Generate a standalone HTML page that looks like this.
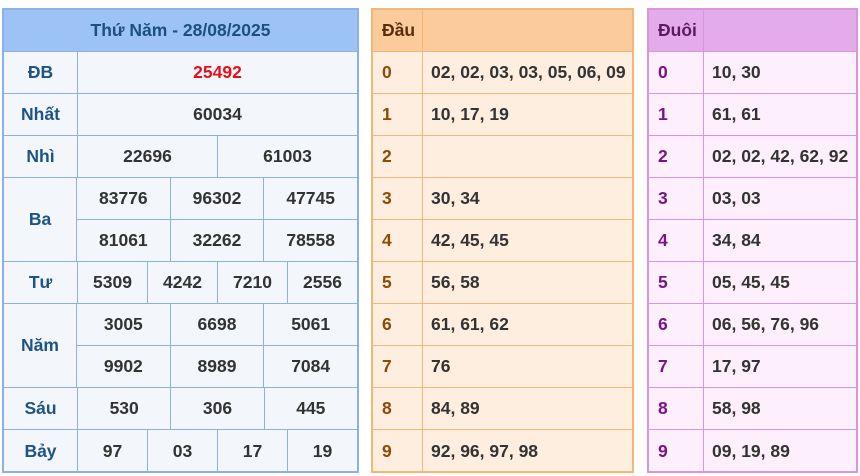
<!DOCTYPE html>
<html><head><meta charset="utf-8"><style>
*{box-sizing:border-box;margin:0;padding:0}
body{width:860px;height:476px;background:#fff;font-family:"Liberation Sans",Arial,sans-serif;font-weight:bold;font-size:17.5px;color:#333;position:relative;overflow:hidden}
.t{position:absolute;top:8px;height:465px}
.row{display:flex;height:42px;border-bottom:1px solid}
.row:last-child{border-bottom:none}
.c{display:flex;align-items:center;justify-content:center;flex:1;border-left:1px solid;height:100%}
.c:first-child{border-left:none}
#L{left:2px;width:357px;border:2px solid #8cb1e6;background:#f3f6fb}
#L .row,#L .c,#L .blk,#L .sub{border-color:#8cb1e6}
#L .hd{background:#9cc2f6;color:#1d4f80;justify-content:center;align-items:center;height:42px}
.lab{width:73px;flex:none!important;color:#1d5485}
.blk{display:flex;height:84px;border-bottom:1px solid}
.blk .lab{border-right:1px solid #8cb1e6;display:flex;align-items:center;justify-content:center}
.blk .in{flex:1}
.blk .in .row{height:42px}
.in .row:last-child{border-bottom:none;height:41px}
.lab+.c{border-left:1px solid}
#M{left:371px;width:263px;border:2px solid #f3b676;background:#fdeee0}
#M .row,#M .c{border-color:#f3b676}
#M .hd{background:#fbcb9b}
#R{left:647px;width:211px;border:2px solid #db95dc;background:#fdf0fc}
#R .row,#R .c{border-color:#db95dc}
#R .hd{background:#e4abea}
.k{width:49px;flex:none;justify-content:flex-start;padding-left:9px}
.v{justify-content:flex-start;padding-left:8px}
#M .k{color:#8d4b04}#M .hd .k{color:#5a2d0a}
#R .k{width:54px;color:#7a1389}#R .hd .k{color:#5a1a60}
</style></head><body>
<div class="t" id="L">
<div class="row hd" style="display:flex">Thứ Năm - 28/08/2025</div>
<div class="row"><div class="c lab">ĐB</div><div class="c" style="color:#e5101a">25492</div></div>
<div class="row"><div class="c lab">Nhất</div><div class="c">60034</div></div>
<div class="row"><div class="c lab">Nhì</div><div class="c">22696</div><div class="c">61003</div></div>
<div class="blk"><div class="lab">Ba</div><div class="in">
<div class="row"><div class="c">83776</div><div class="c">96302</div><div class="c">47745</div></div>
<div class="row"><div class="c">81061</div><div class="c">32262</div><div class="c">78558</div></div></div></div>
<div class="row"><div class="c lab">Tư</div><div class="c">5309</div><div class="c">4242</div><div class="c">7210</div><div class="c">2556</div></div>
<div class="blk"><div class="lab">Năm</div><div class="in">
<div class="row"><div class="c">3005</div><div class="c">6698</div><div class="c">5061</div></div>
<div class="row"><div class="c">9902</div><div class="c">8989</div><div class="c">7084</div></div></div></div>
<div class="row"><div class="c lab">Sáu</div><div class="c">530</div><div class="c">306</div><div class="c">445</div></div>
<div class="row"><div class="c lab">Bảy</div><div class="c">97</div><div class="c">03</div><div class="c">17</div><div class="c">19</div></div>
</div>
<div class="t" id="M">
<div class="row hd"><div class="c k">Đầu</div><div class="c v"></div></div>
<div class="row"><div class="c k">0</div><div class="c v">02, 02, 03, 03, 05, 06, 09</div></div>
<div class="row"><div class="c k">1</div><div class="c v">10, 17, 19</div></div>
<div class="row"><div class="c k">2</div><div class="c v"></div></div>
<div class="row"><div class="c k">3</div><div class="c v">30, 34</div></div>
<div class="row"><div class="c k">4</div><div class="c v">42, 45, 45</div></div>
<div class="row"><div class="c k">5</div><div class="c v">56, 58</div></div>
<div class="row"><div class="c k">6</div><div class="c v">61, 61, 62</div></div>
<div class="row"><div class="c k">7</div><div class="c v">76</div></div>
<div class="row"><div class="c k">8</div><div class="c v">84, 89</div></div>
<div class="row"><div class="c k">9</div><div class="c v">92, 96, 97, 98</div></div>
</div>
<div class="t" id="R">
<div class="row hd"><div class="c k">Đuôi</div><div class="c v"></div></div>
<div class="row"><div class="c k">0</div><div class="c v">10, 30</div></div>
<div class="row"><div class="c k">1</div><div class="c v">61, 61</div></div>
<div class="row"><div class="c k">2</div><div class="c v">02, 02, 42, 62, 92</div></div>
<div class="row"><div class="c k">3</div><div class="c v">03, 03</div></div>
<div class="row"><div class="c k">4</div><div class="c v">34, 84</div></div>
<div class="row"><div class="c k">5</div><div class="c v">05, 45, 45</div></div>
<div class="row"><div class="c k">6</div><div class="c v">06, 56, 76, 96</div></div>
<div class="row"><div class="c k">7</div><div class="c v">17, 97</div></div>
<div class="row"><div class="c k">8</div><div class="c v">58, 98</div></div>
<div class="row"><div class="c k">9</div><div class="c v">09, 19, 89</div></div>
</div>
</body></html>
